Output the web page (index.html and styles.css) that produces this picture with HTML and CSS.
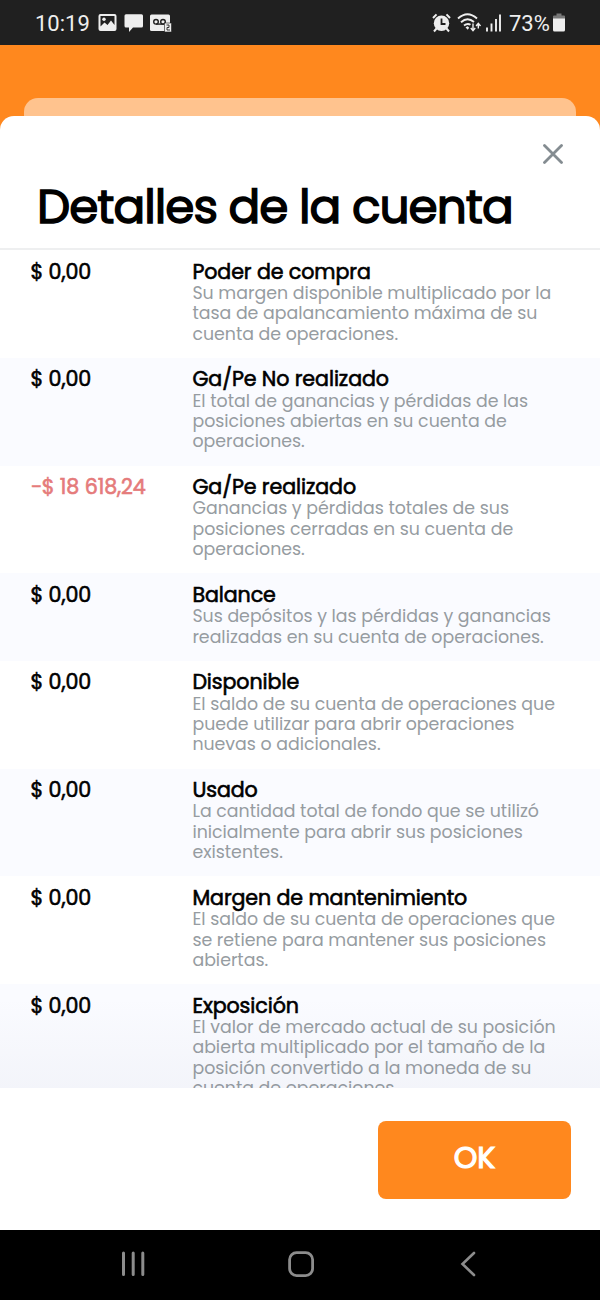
FILE: index.html
```html
<!DOCTYPE html>
<html lang="es">
<head>
    <meta charset="UTF-8">
    <meta name="viewport" content="width=device-width, initial-scale=1.0">
    <title>Detalles de la cuenta</title>
    <link rel="stylesheet" href="styles.css">
</head>
<body>
    <div class="status-bar">
        <span class="clock">10:19</span>
        <svg class="status-left" width="74" height="20" viewBox="0 0 74 20">
            <path fill="#eee" fill-rule="evenodd" d="M2.500 1h14q2 0 2 2v13q0 2-2 2H2.500q-2 0-2-2V3q0-2 2-2zM2.500 3v10.500l4-4 3 2.500 3.500-4.500 3.500 4.500V3z"/>
            <circle cx="6" cy="6.300" r="1.700" fill="#eee"/>
            <path fill="#eee" d="M28 1.200h15.500q1.500 0 1.500 1.500V13q0 1.500-1.500 1.500H35L31 19v-4.500h-3q-1.500 0-1.500-1.500V2.700q0-1.500 1.500-1.500z"/>
            <rect x="52" y="1.500" width="20" height="16.500" rx="1.500" fill="#eee"/>
            <g fill="none" stroke="#202020" stroke-width="1.400">
                <circle cx="58" cy="8.800" r="2.300"/>
                <circle cx="65" cy="8.800" r="2.300"/>
                <path d="M58 11.100h8"/>
            </g>
            <rect x="66.500" y="10" width="7" height="9" fill="#eee" stroke="#202020" stroke-width=".6"/>
            <path d="M68.500 12h2.500v2.500h-2V17H72" fill="none" stroke="#202020" stroke-width=".9"/>
        </svg>
        <svg class="status-right" width="74" height="20" viewBox="0 0 74 20">
            <circle cx="9.500" cy="10.200" r="7.700" fill="#eee"/>
            <path d="M1 5l3.500-3.600M14.500 1.400L18 5M4.500 15.500l-2.500 3M14.500 15.500l2.500 3" stroke="#eee" stroke-width="2" fill="none"/>
            <path d="M9.500 5.500v5.500h4" stroke="#202020" stroke-width="1.800" fill="none"/>
            <g fill="none" stroke="#eee" stroke-width="1.900">
                <path d="M26 5.500Q35.500 -3 45 5.500"/>
                <path d="M29 9.200Q35.500 3.300 42 9"/>
                <path d="M32 12.600Q35.500 9.800 38.500 11.800"/>
            </g>
            <path d="M33.500 14.200l2.200-1 1.500 1.500-1.500 2z" fill="#eee"/>
            <path d="M41 10.500v6.500M38.800 15l2.200 2.600 2.200-2.600M46.300 15.500V11M44.100 13l2.200-2.600 2.200 2.600" fill="none" stroke="#eee" stroke-width="1.400"/>
            <path d="M55 18.500v-4M59.500 18.500v-8M64 18.500V6M68 18.500V1.500" stroke="#eee" stroke-width="1.900"/>
        </svg>
        <span class="battery-level">73%</span>
        <svg class="battery" width="12" height="19" viewBox="0 0 12 19">
            <path fill="#777" d="M3.500 0.500h5v2H11q1 0 1 1V6H0V3.500q0-1 1-1h2.500z"/>
            <path fill="#eee" d="M0 5.500h12V17q0 1.500-1.500 1.500h-9Q0 18.500 0 17z"/>
        </svg>
    </div>

    <div class="backdrop">
        <div class="card-behind"></div>
    </div>

    <div class="sheet">
        <div class="sheet-header">
            <button class="close-button" aria-label="Cerrar">
                <svg width="20" height="20" viewBox="0 0 20 20">
                    <path d="M1.500 1.500l17 17M18.500 1.500l-17 17" stroke="#848c91" stroke-width="2.800" stroke-linecap="round"/>
                </svg>
            </button>
            <h1>Detalles de la cuenta</h1>
        </div>

        <div class="details">
            <div class="row">
                <div class="value">$ 0,00</div>
                <div class="info">
                    <h2>Poder de compra</h2>
                    <p>Su margen disponible multiplicado por la<br>tasa de apalancamiento máxima de su<br>cuenta de operaciones.</p>
                </div>
            </div>
            <div class="row">
                <div class="value">$ 0,00</div>
                <div class="info">
                    <h2>Ga/Pe No realizado</h2>
                    <p>El total de ganancias y pérdidas de las<br>posiciones abiertas en su cuenta de<br>operaciones.</p>
                </div>
            </div>
            <div class="row">
                <div class="value negative">−$ 18 618,24</div>
                <div class="info">
                    <h2>Ga/Pe realizado</h2>
                    <p>Ganancias y pérdidas totales de sus<br>posiciones cerradas en su cuenta de<br>operaciones.</p>
                </div>
            </div>
            <div class="row">
                <div class="value">$ 0,00</div>
                <div class="info">
                    <h2>Balance</h2>
                    <p>Sus depósitos y las pérdidas y ganancias<br>realizadas en su cuenta de operaciones.</p>
                </div>
            </div>
            <div class="row">
                <div class="value">$ 0,00</div>
                <div class="info">
                    <h2>Disponible</h2>
                    <p>El saldo de su cuenta de operaciones que<br>puede utilizar para abrir operaciones<br>nuevas o adicionales.</p>
                </div>
            </div>
            <div class="row">
                <div class="value">$ 0,00</div>
                <div class="info">
                    <h2>Usado</h2>
                    <p>La cantidad total de fondo que se utilizó<br>inicialmente para abrir sus posiciones<br>existentes.</p>
                </div>
            </div>
            <div class="row">
                <div class="value">$ 0,00</div>
                <div class="info">
                    <h2>Margen de mantenimiento</h2>
                    <p>El saldo de su cuenta de operaciones que<br>se retiene para mantener sus posiciones<br>abiertas.</p>
                </div>
            </div>
            <div class="row">
                <div class="value">$ 0,00</div>
                <div class="info">
                    <h2>Exposición</h2>
                    <p>El valor de mercado actual de su posición<br>abierta multiplicado por el tamaño de la<br>posición convertido a la moneda de su<br>cuenta de operaciones.</p>
                </div>
            </div>
        </div>

        <div class="sheet-footer">
            <button class="ok-button">OK</button>
        </div>
    </div>

    <div class="nav-bar">
        <svg width="26" height="26" viewBox="0 0 26 26">
            <path d="M3.500 2v21.500M13.200 2v21.500M22.800 2v21.500" stroke="#8c8c8c" stroke-width="3" stroke-linecap="round"/>
        </svg>
        <svg width="28" height="28" viewBox="0 0 28 28">
            <rect x="2.600" y="2.600" width="23" height="23" rx="7" fill="none" stroke="#8c8c8c" stroke-width="2.800"/>
        </svg>
        <svg width="26" height="26" viewBox="0 0 26 26">
            <path d="M19 2L7.500 13 19 24" fill="none" stroke="#8c8c8c" stroke-width="2.600" stroke-linecap="round"/>
        </svg>
    </div>
</body>
</html>
```
FILE: styles.css
```css
* {
    box-sizing: border-box;
}
body {
    font-family: Poppins, Inter, sans-serif;
    font-feature-settings: "cv11";
    margin: 0;
    height: 1300px;
    display: flex;
    flex-direction: column;
    overflow: hidden;
    background-color: #ff881e;
    color: #000;
}
h1, h2, p {
    margin: 0;
}
button {
    font: inherit;
    border: none;
    padding: 0;
    cursor: pointer;
}
.status-bar {
    height: 45px;
    flex: none;
    display: flex;
    align-items: center;
    padding: 0 35px;
    background-color: #202020;
    color: #eee;
    font-family: Roboto, sans-serif;
    font-size: 22px;
}
.clock {
    width: 63px;
    padding-top: 2px;
}
.status-right {
    margin-left: auto;
    margin-right: 3px;
}
.battery-level {
    width: 44px;
    padding-top: 2px;
    white-space: nowrap;
}
.backdrop {
    height: 71px;
    flex: none;
    padding: 53px 24px 0;
}
.card-behind {
    height: 40px;
    border-radius: 14px 14px 0 0;
    background-color: #ffc38e;
}
.sheet {
    position: relative;
    height: 1114px;
    flex: none;
    display: flex;
    flex-direction: column;
    border-radius: 14px 14px 0 0;
    background-color: #fff;
}
.sheet-header {
    height: 134px;
    flex: none;
    display: flex;
    flex-direction: column;
    padding: 28px 37px 0;
    border-bottom: 2px solid #eeeff0;
}
.close-button {
    align-self: flex-end;
    width: 20px;
    height: 20px;
    background: none;
}
.close-button svg {
    display: block;
}
h1 {
    margin-top: 13px;
    font-size: 47px;
    font-weight: 400;
    line-height: 60px;
    letter-spacing: -1px;
    white-space: nowrap;
    -webkit-text-stroke: 1.400px #000;
}
.details {
    position: relative;
    height: 838px;
    overflow: hidden;
}
.details::after {
    content: "";
    position: absolute;
    left: 0;
    right: 0;
    bottom: 0;
    height: 90px;
    background: linear-gradient(rgba(90, 100, 140, 0), rgba(90, 100, 140, 0.045));
}
.row {
    display: grid;
    grid-template-columns: 162px 1fr;
    padding: 9.500px 0 13.900px 30.400px;
}
.row:nth-child(even) {
    background-color: #fafbff;
}
.value, h2 {
    font-size: 20.600px;
    font-weight: 400;
    line-height: 23.200px;
    letter-spacing: -0.080px;
    white-space: nowrap;
    -webkit-text-stroke: 0.600px currentColor;
}
.negative {
    color: #e57b7b;
}
.info p {
    color: #969ca1;
    font-size: 17.370px;
    line-height: 20.400px;
    white-space: nowrap;
}
.sheet-footer {
    flex: 1;
    display: flex;
    justify-content: flex-end;
    align-items: flex-start;
    padding: 33px 29px 0;
}
.ok-button {
    width: 193px;
    height: 78px;
    padding-bottom: 4px;
    border-radius: 8px;
    background-color: #ff881e;
    color: #fff;
    font-size: 30px;
    -webkit-text-stroke: 1.200px #fff;
}
.nav-bar {
    flex: 1;
    display: flex;
    justify-content: space-between;
    align-items: center;
    padding: 0 119px 2px 120px;
    background-color: #000;
}
```
